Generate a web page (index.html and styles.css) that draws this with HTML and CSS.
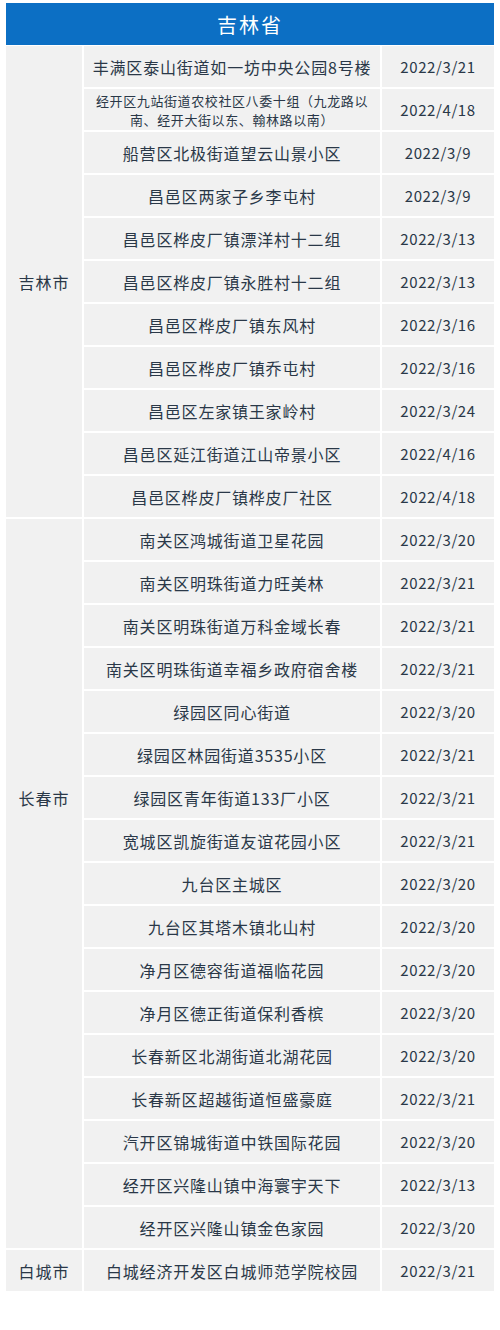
FILE: index.html
```html
<!DOCTYPE html>
<html lang="zh">
<head>
<meta charset="utf-8">
<link rel="stylesheet" href="styles.css">
</head>
<body>
<div class="sheet">
  <div class="title">吉林省</div>
  <div class="grid">
    <div class="city city-jl">吉林市</div>
    <div class="addr">丰满区泰山街道如一坊中央公园8号楼</div><div class="date">2022/3/21</div>
    <div class="addr small"><span class="line">经开区九站街道农校社区八委十组（九龙路以</span><span class="line">南、经开大街以东、翰林路以南）</span></div><div class="date">2022/4/18</div>
    <div class="addr">船营区北极街道望云山景小区</div><div class="date">2022/3/9</div>
    <div class="addr">昌邑区两家子乡李屯村</div><div class="date">2022/3/9</div>
    <div class="addr">昌邑区桦皮厂镇漂洋村十二组</div><div class="date">2022/3/13</div>
    <div class="addr">昌邑区桦皮厂镇永胜村十二组</div><div class="date">2022/3/13</div>
    <div class="addr">昌邑区桦皮厂镇东风村</div><div class="date">2022/3/16</div>
    <div class="addr">昌邑区桦皮厂镇乔屯村</div><div class="date">2022/3/16</div>
    <div class="addr">昌邑区左家镇王家岭村</div><div class="date">2022/3/24</div>
    <div class="addr">昌邑区延江街道江山帝景小区</div><div class="date">2022/4/16</div>
    <div class="addr">昌邑区桦皮厂镇桦皮厂社区</div><div class="date">2022/4/18</div>

    <div class="city city-cc">长春市</div>
    <div class="addr">南关区鸿城街道卫星花园</div><div class="date">2022/3/20</div>
    <div class="addr">南关区明珠街道力旺美林</div><div class="date">2022/3/21</div>
    <div class="addr">南关区明珠街道万科金域长春</div><div class="date">2022/3/21</div>
    <div class="addr">南关区明珠街道幸福乡政府宿舍楼</div><div class="date">2022/3/21</div>
    <div class="addr">绿园区同心街道</div><div class="date">2022/3/20</div>
    <div class="addr">绿园区林园街道3535小区</div><div class="date">2022/3/21</div>
    <div class="addr">绿园区青年街道133厂小区</div><div class="date">2022/3/21</div>
    <div class="addr">宽城区凯旋街道友谊花园小区</div><div class="date">2022/3/21</div>
    <div class="addr">九台区主城区</div><div class="date">2022/3/20</div>
    <div class="addr">九台区其塔木镇北山村</div><div class="date">2022/3/20</div>
    <div class="addr">净月区德容街道福临花园</div><div class="date">2022/3/20</div>
    <div class="addr">净月区德正街道保利香槟</div><div class="date">2022/3/20</div>
    <div class="addr">长春新区北湖街道北湖花园</div><div class="date">2022/3/20</div>
    <div class="addr">长春新区超越街道恒盛豪庭</div><div class="date">2022/3/21</div>
    <div class="addr">汽开区锦城街道中铁国际花园</div><div class="date">2022/3/20</div>
    <div class="addr">经开区兴隆山镇中海寰宇天下</div><div class="date">2022/3/13</div>
    <div class="addr">经开区兴隆山镇金色家园</div><div class="date">2022/3/20</div>

    <div class="city city-bc">白城市</div>
    <div class="addr">白城经济开发区白城师范学院校园</div><div class="date">2022/3/21</div>
  </div>
</div>
</body>
</html>
```

FILE: styles.css
```css
html, body {
  margin: 0;
  padding: 0;
  background: #ffffff;
}

body {
  font-family: "Noto Sans CJK SC", "Noto Sans", sans-serif;
  color: #2a3848;
}

.sheet {
  width: 488px;
  margin: 3px 0 0 6px;
}

.title {
  height: 42px;
  background: #0c6fc4;
  color: #ffffff;
  font-size: 20px;
  letter-spacing: 2px;
  display: flex;
  align-items: center;
  justify-content: center;
  margin-bottom: 1px;
}

.grid {
  display: grid;
  grid-template-columns: 76px 296px 112px;
  grid-auto-rows: 41px;
  gap: 2px;
}

.grid > div {
  background: #f1f1f1;
  display: flex;
  align-items: center;
  justify-content: center;
  text-align: center;
}

.city {
  grid-column: 1;
  font-size: 16px;
  letter-spacing: 1px;
}

.city-jl { grid-row: 1 / span 11; }
.city-cc { grid-row: 12 / span 17; padding-bottom: 171px; }
.city-bc { grid-row: 29 / span 1; }

.addr {
  grid-column: 2;
  font-size: 16px;
  letter-spacing: 0.8px;
  white-space: nowrap;
}

.grid > .addr.small {
  flex-direction: column;
  font-size: 13px;
  letter-spacing: 0.6px;
}

.line {
  display: block;
  height: 19px;
  line-height: 19px;
}

.date {
  grid-column: 3;
  font-size: 15px;
  letter-spacing: 0.6px;
}
```
